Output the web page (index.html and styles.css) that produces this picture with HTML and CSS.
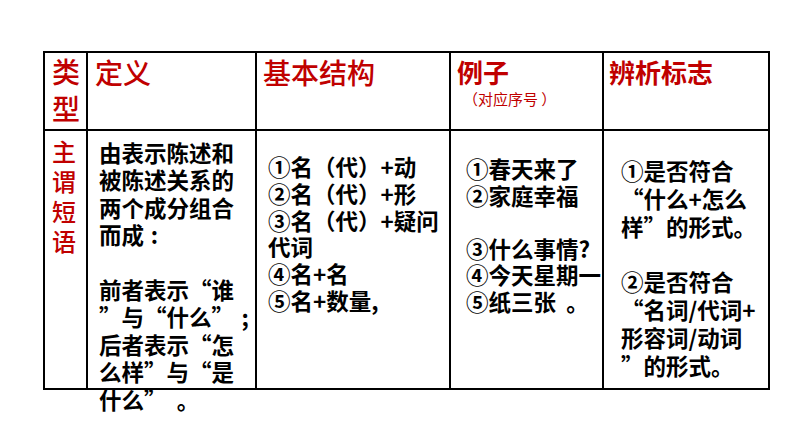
FILE: index.html
```html
<!DOCTYPE html>
<html lang="zh-CN">
<head>
<meta charset="utf-8">
<title>主谓短语</title>
<link rel="stylesheet" href="styles.css">
</head>
<body>
<div class="grid">
  <div class="cell h h1">类<br>型</div>
  <div class="cell h h2">定义</div>
  <div class="cell h h3">基本结构</div>
  <div class="cell h h4"><div class="hb">例子</div><div class="sub">（对应序号 ）</div></div>
  <div class="cell h h5"><div class="hb">辨析标志</div></div>

  <div class="cell b1">主<br>谓<br>短<br>语</div>
  <div class="cell b2">由表示陈述和<br>被陈述关系的<br>两个成分组合<br>而成<span class="pl">:</span><br>&nbsp;<br>前者表示<span class="qo">“</span>谁<br><span class="qc">”</span>与<span class="qo">“</span>什么<span class="qc">”</span><span class="pc">;</span><br>后者表示<span class="qo">“</span>怎<br>么样<span class="qc">”</span>与<span class="qo">“</span>是<br>什么<span class="qc">”</span><span class="pd">。</span></div>
  <div class="cell b3">①名（代）+动<br>②名（代）+形<br>③名（代）+疑问<br>代词<br>④名+名<br>⑤名+数量,</div>
  <div class="cell b4">①春天来了<br>②家庭幸福<br>&nbsp;<br>③什么事情?<br>④今天星期一<br>⑤纸三张<span class="pd">。</span></div>
  <div class="cell b5">①是否符合<br><span class="qo">“</span>什么+怎么<br>样<span class="qc">”</span>的形式。<br>&nbsp;<br>②是否符合<br><span class="qo">“</span>名词/代词+<br>形容词/动词<br><span class="qc">”</span>的形式。</div>
</div>
</body>
</html>
```
FILE: styles.css
```css
html, body {
  margin: 0;
  padding: 0;
  background: #ffffff;
}
body {
  width: 794px;
  height: 447px;
  overflow: hidden;
  font-family: "Noto Sans CJK SC", "Noto Sans", "Liberation Sans", sans-serif;
}
.grid {
  display: grid;
  grid-template-columns: 43px 169px 194px 153px 166px;
  grid-template-rows: 78px 259px;
  margin: 51px 0 0 43px;
  width: max-content;
  border-top: 2px solid #000;
  border-left: 2px solid #000;
}
.cell {
  box-sizing: border-box;
  border-right: 2px solid #000;
  border-bottom: 2px solid #000;
  white-space: nowrap;
  overflow: visible;
  position: relative;
  z-index: 1;
}
.qo, .qc, .pc, .pl, .pd {
  display: inline-block;
  width: 1em;
  box-sizing: border-box;
}
.qo { text-align: right; }
.qc { text-align: left; }
.pc { text-align: center; }
.pl { text-align: left; padding-left: 0.3em; }
.pd { text-align: left; padding-left: 0.45em; }
.h {
  color: #c00000;
  font-size: 28px;
  font-weight: 500;
  line-height: 37px;
  padding-left: 6px;
}
.h1 { padding-left: 7px; padding-top: 0; }
.h2 { padding-left: 7px; padding-top: 1px; }
.h3 { padding-top: 1px; }
.h4, .h5 { padding-top: 2px; padding-left: 6px; }
.h5 { padding-left: 5px; }
.hb {
  font-size: 26px;
  font-weight: 700;
  line-height: 34px;
}
.sub {
  font-size: 15px;
  font-weight: 400;
  line-height: 20px;
  padding-left: 6px;
}
.b1 {
  color: #c00000;
  font-size: 24px;
  font-weight: 500;
  line-height: 30px;
  padding: 5px 0 0 7px;
}
.b2, .b3, .b4, .b5 {
  font-size: 22.5px;
  font-weight: 700;
  color: #000;
}
.b2 {
  line-height: 27.4px;
  padding: 8px 0 0 11px;
}
.b3 {
  line-height: 26.8px;
  padding: 22px 0 0 11px;
}
.b4 {
  line-height: 26.6px;
  padding: 24px 0 0 15px;
  z-index: 2;
}
.b5 {
  line-height: 27.8px;
  padding: 26px 0 0 17px;
}
```
